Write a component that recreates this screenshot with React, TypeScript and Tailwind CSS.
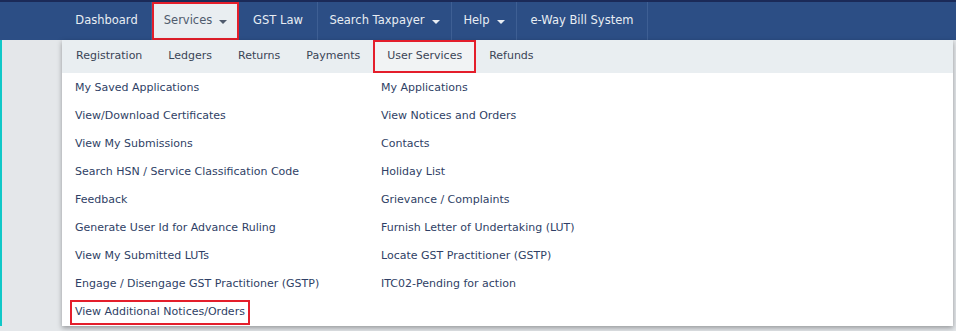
import React from "react";

const navItems = [
  { label: "Dashboard", w: "w-[90px]" },
  { label: "Services", w: "w-[87px]", caret: true, active: true },
  { label: "GST Law", w: "w-[79px]" },
  { label: "Search Taxpayer", w: "w-[134px]", caret: true },
  { label: "Help", w: "w-[65px]", caret: true },
  { label: "e-Way Bill System", w: "w-[131px]" },
];

const subItems = ["Registration", "Ledgers", "Returns", "Payments", "User Services", "Refunds"];

const leftLinks = [
  "My Saved Applications",
  "View/Download Certificates",
  "View My Submissions",
  "Search HSN / Service Classification Code",
  "Feedback",
  "Generate User Id for Advance Ruling",
  "View My Submitted LUTs",
  "Engage / Disengage GST Practitioner (GSTP)",
  "View Additional Notices/Orders",
];

const rightLinks = [
  "My Applications",
  "View Notices and Orders",
  "Contacts",
  "Holiday List",
  "Grievance / Complaints",
  "Furnish Letter of Undertaking (LUT)",
  "Locate GST Practitioner (GSTP)",
  "ITC02-Pending for action",
];

function Caret() {
  return <span className="ml-[7px] inline-block border-x-[4px] border-t-[4px] border-x-transparent border-t-current translate-y-[1px]" />;
}

export default function App() {
  return (
    <div className="relative h-[331px] w-[956px] overflow-hidden bg-[#e4e7ea] font-['DejaVu_Sans',sans-serif] text-[11px]">
      {/* top nav */}
      <div className="flex h-[40px] border-t-2 border-[#1b2a58] bg-[#2c4e85] pl-[62px] text-[11.5px]">
        {navItems.map((n) => (
          <div
            key={n.label}
            className={
              n.active
                ? `${n.w} flex items-center justify-center border-2 border-[#e41e2b] bg-[#e9eef1] text-[#4f5b6d]`
                : `${n.w} flex items-center justify-center border-r border-[#3e5f94] text-[#e8edf3]`
            }
          >
            {n.label}
            {n.caret && <Caret />}
          </div>
        ))}
      </div>

      <div className="flex">
        <div className="w-[2px] bg-[#10c8c8]" />
        <div className="w-[60px]" />
        {/* dropdown panel */}
        <div className="w-[891px] bg-white shadow-[0_2px_5px_rgba(0,0,0,0.35)]">
          <div className="flex h-[33px] items-stretch bg-[#e9eef1] pl-px text-[#3a4456]">
            {subItems.map((s) => (
              <div
                key={s}
                className={
                  s === "User Services"
                    ? "flex items-center border-2 border-[#e41e2b] bg-[#f1f3f4] px-[12px]"
                    : "flex items-center px-[13px]"
                }
              >
                {s}
              </div>
            ))}
          </div>
          <div className="grid grid-cols-[306px_1fr] pl-[13px] pt-[1px] text-[#2f3f66]">
            <div className="flex flex-col">
              {leftLinks.map((l) =>
                l === "View Additional Notices/Orders" ? (
                  <div key={l} className="flex h-[28px] items-center -ml-[5px]">
                    <span className="flex h-[25px] items-center border-2 border-[#e41e2b] px-[3px]">{l}</span>
                  </div>
                ) : (
                  <div key={l} className="flex h-[28px] items-center">
                    {l}
                  </div>
                )
              )}
            </div>
            <div className="flex flex-col">
              {rightLinks.map((l) => (
                <div key={l} className="flex h-[28px] items-center">
                  {l}
                </div>
              ))}
            </div>
          </div>
        </div>
      </div>
    </div>
  );
}
